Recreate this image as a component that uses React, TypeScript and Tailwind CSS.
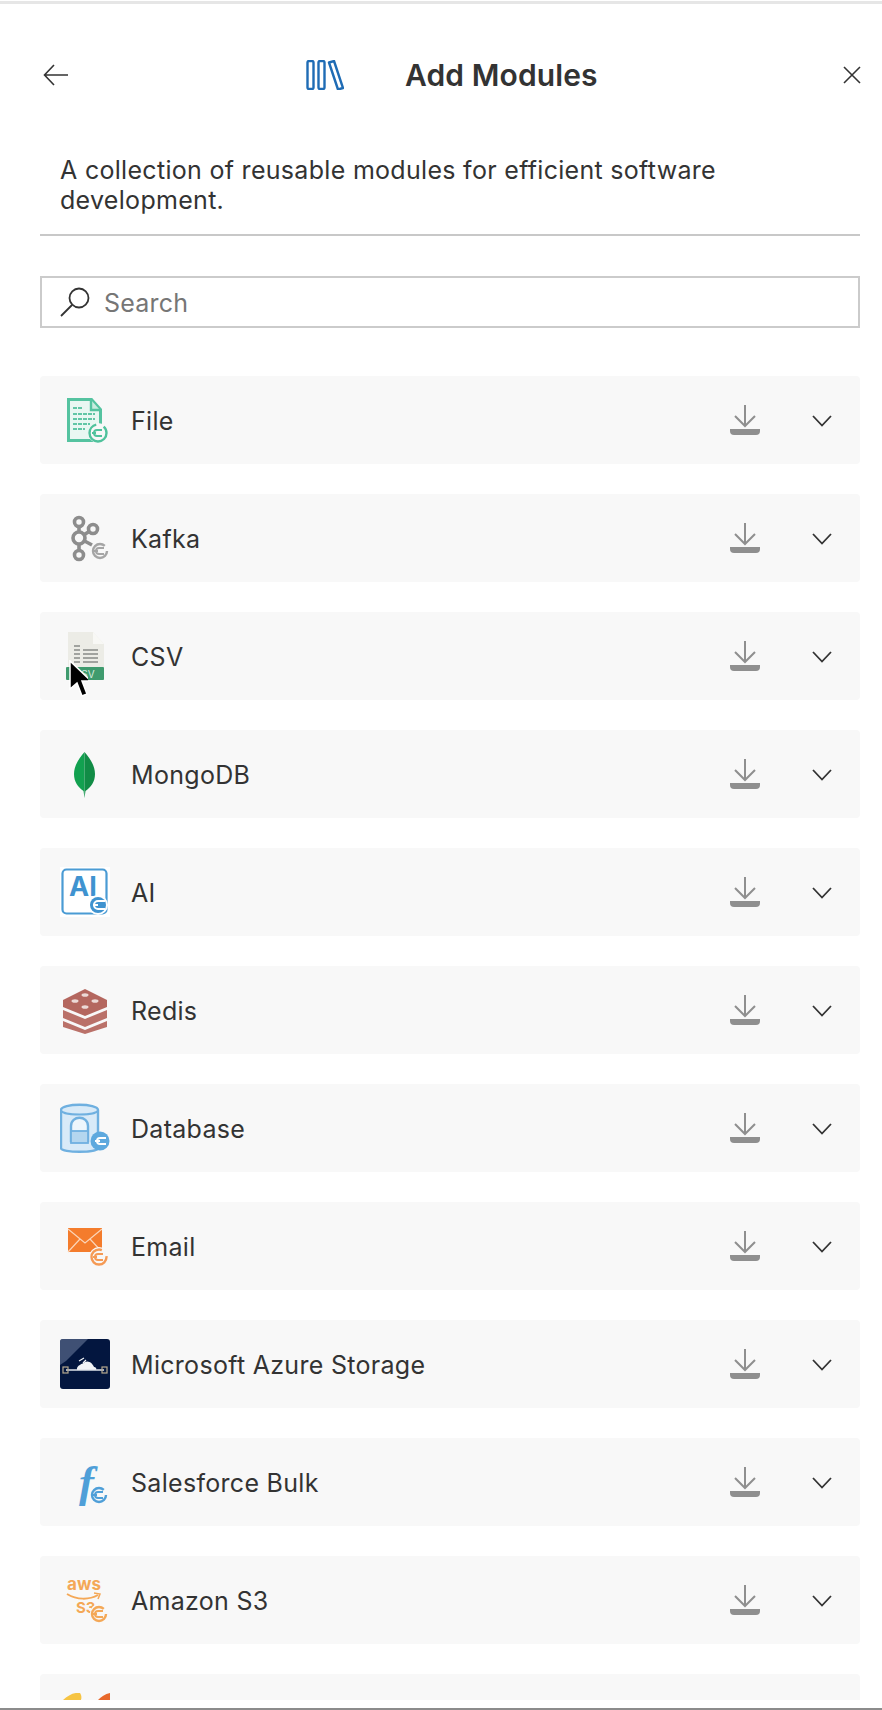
import React from 'react'

const PlugBadge = ({ color, cx = 38, cy = 39, r = 8 }: { color: string; cx?: number; cy?: number; r?: number }) => (
    <g fill="none" stroke={color}>
        <circle cx={cx} cy={cy} r={r} strokeWidth="2.4" strokeDasharray="38 8" fill="#f8f8f8" />
        <path d={`M${cx + 4} ${cy - 3}H${cx - 1}a3 3 0 0 0 0 6H${cx + 4}M${cx - 2} ${cy}H${cx - 6}`} strokeWidth="2" />
    </g>
)

const FileIcon = () => (
    <svg viewBox="0 0 50 50" className="w-full h-full">
        <path d="M8.500 4.500h23l9 10v31h-32z" fill="#e9f7f2" stroke="#55c3a0" strokeWidth="3" />
        <path d="M31 5v10h9" fill="#c9ecdf" stroke="#55c3a0" strokeWidth="2.400" />
        <path d="M13 13h9M13 19h22M13 24h22M13 29h17M13 34h12" stroke="#62c6a6" strokeWidth="2.200" strokeDasharray="4 1" />
        <circle cx="38" cy="38" r="10" fill="#f8f8f8" />
        <PlugBadge color="#4fc29c" cx={38} cy={38} r={8.500} />
    </svg>
)

const KafkaIcon = () => (
    <svg viewBox="0 0 50 50" className="w-full h-full" fill="none" stroke="#8d8d8d" strokeWidth="3.600">
        <path d="M19 11v28M19 25l14-9M19 25l13 7" />
        <circle cx="19" cy="9" r="4.500" fill="#f8f8f8" />
        <circle cx="19" cy="25" r="6" fill="#f8f8f8" />
        <circle cx="19" cy="42" r="4.500" fill="#f8f8f8" />
        <circle cx="33" cy="16" r="4.500" fill="#f8f8f8" />
        <PlugBadge color="#a5a5a5" cx={40} cy={38} r={7} />
    </svg>
)

const CsvIcon = () => (
    <svg viewBox="0 0 50 50" className="w-full h-full">
        <path d="M8 1h25l11 12v36H8z" fill="#ecece6" />
        <path d="M33 1v12h11z" fill="#f8f8f5" />
        <path d="M14 15h6M14 19h6M14 23h6M14 27h6M14 31h6M23 19h15M23 23h15M23 27h15M23 31h15" stroke="#a1a39f" strokeWidth="2" />
        <rect x="6" y="36" width="38" height="13" rx="1" fill="#3f9b6e" />
        <text x="28" y="46.500" textAnchor="middle" fontSize="10" fontFamily="Inter, sans-serif" fill="#d5eadf">SV</text>
    </svg>
)

const MongoIcon = () => (
    <svg viewBox="0 0 50 50" className="w-full h-full">
        <path d="M24.500 3C18 10 14 18 14 25c0 8 4 13 9.500 17L24.500 49z" fill="#12a150" />
        <path d="M24.500 3C31 10 35 18 35 25c0 8-4 13-9.500 17L24.500 49z" fill="#118c46" />
    </svg>
)

const AiIcon = () => (
    <svg viewBox="0 0 50 50" className="w-full h-full">
        <rect x="0" y="0" width="50" height="50" fill="#fff" />
        <rect x="2.500" y="2.500" width="44" height="44" rx="4" fill="#fff" stroke="#4a9bd4" strokeWidth="2.200" />
        <text x="9" y="29" fontSize="27" fontWeight="700" fontFamily="Inter, sans-serif" fill="#3f93d0">AI</text>
        <circle cx="38" cy="38" r="10" fill="#fff" />
        <circle cx="38" cy="38" r="8" fill="#3f93d0" />
        <path d="M45 34h-7a4 4 0 0 0 0 8h7M38 38h-5" fill="none" stroke="#fff" strokeWidth="2" />
    </svg>
)

const RedisIcon = () => (
    <svg viewBox="0 0 50 50" className="w-full h-full">
        <path d="M3 36l22 9 22-9v6l-22 7-22-7z" fill="#ba7169" />
        <path d="M3 25l22 9 22-9v8l-22 9-22-9z" fill="#ba7169" />
        <path d="M3 15l22-11 22 11v7l-22 9-22-9z" fill="#b4675f" />
        <ellipse cx="25" cy="10" rx="3.500" ry="1.800" fill="#ecd9d6" />
        <ellipse cx="35" cy="16" rx="3.500" ry="1.800" fill="#ecd9d6" />
        <ellipse cx="15" cy="16" rx="3.500" ry="1.800" fill="#ecd9d6" />
        <ellipse cx="25" cy="22" rx="3.500" ry="1.800" fill="#ecd9d6" />
    </svg>
)

const DatabaseIcon = () => (
    <svg viewBox="0 0 50 50" className="w-full h-full" fill="none">
        <path d="M1 7c0-7 37-7 37 0v38c0 5-37 5-37 0z" fill="#d8eaf8" stroke="#6fb0e0" strokeWidth="2.400" />
        <path d="M1 7c0 6 37 6 37 0" stroke="#6fb0e0" strokeWidth="2" />
        <path d="M11 38V23c0-11 17-11 17 0v15z" fill="#eef6fc" stroke="#6fb0e0" strokeWidth="2.400" />
        <rect x="11" y="28" width="17" height="12" fill="#b4d6ef" stroke="#6fb0e0" strokeWidth="1.800" />
        <circle cx="40" cy="38" r="9.500" fill="#5ea9de" />
        <path d="M46 35h-6a3 3 0 0 0 0 6h6M40 38h-5" stroke="#fff" strokeWidth="2" />
    </svg>
)

const EmailIcon = () => (
    <svg viewBox="0 0 50 50" className="w-full h-full">
        <rect x="8" y="7" width="34" height="24" fill="#f47c2c" />
        <path d="M8 8l17 14 17-14M8 31l12-13M42 31L30 18" fill="none" stroke="#fbd5b8" strokeWidth="1.200" />
        <circle cx="39" cy="36" r="10" fill="#f8f8f8" />
        <PlugBadge color="#f59a55" cx={39} cy={36} r={7.500} />
    </svg>
)

const AzureIcon = () => (
    <svg viewBox="0 0 50 50" className="w-full h-full">
        <rect width="50" height="50" rx="3" fill="#03163f" />
        <path d="M8 0h20L6 22 0 26V3a3 3 0 0 1 3-3z" fill="#5a6a8c" opacity="0.700" />
        <path d="M17 31c-1-5 6-6 8-8 4-2 8 2 9 5 2 0 3 2 2 3z" fill="#f2f4f7" />
        <path d="M19 22l5-3M23 24l3-3" stroke="#f2f4f7" strokeWidth="1.200" />
        <path d="M6 31h38" stroke="#dfe3ea" strokeWidth="1.500" />
        <rect x="3" y="28" width="5" height="6" fill="none" stroke="#b5a88e" strokeWidth="1.200" />
        <rect x="42" y="28" width="5" height="6" fill="none" stroke="#b5a88e" strokeWidth="1.200" />
    </svg>
)

const SalesforceIcon = () => (
    <svg viewBox="0 0 50 50" className="w-full h-full">
        <text x="19" y="40" fontSize="45" fontStyle="italic" fontWeight="700" fontFamily="'Liberation Serif', serif" fill="#4f9fd8">f</text>
        <circle cx="39" cy="38" r="10" fill="#f8f8f8" />
        <PlugBadge color="#4f9fd8" cx={39} cy={38} r={7} />
    </svg>
)

const S3Icon = () => (
    <svg viewBox="0 0 50 50" className="w-full h-full">
        <text x="7" y="15" fontSize="17" fontWeight="700" fontFamily="Inter, sans-serif" fill="#f4a857" textLength="34">aws</text>
        <path d="M7 19c10 6 22 6 31 1" fill="none" stroke="#f4a857" strokeWidth="2" />
        <path d="M34 18l6 1-2 5" fill="none" stroke="#f4a857" strokeWidth="1.500" />
        <text x="16" y="38" fontSize="15" fontWeight="700" fontFamily="Inter, sans-serif" fill="#f4a857">S3</text>
        <circle cx="39" cy="38" r="9" fill="#f8f8f8" />
        <PlugBadge color="#f4a857" cx={39} cy={39} r={7} />
    </svg>
)

const LastIcon = () => (
    <svg viewBox="0 0 50 50" className="w-full h-full">
        <path d="M3 7c5-5 12-8 17-7 2 3 2 7-1 10z" fill="#f6c443" />
        <path d="M38 7c3-3 7-6 12-7v10z" fill="#e8692c" />
    </svg>
)

const modules = [
    { name: 'File', icon: <FileIcon /> },
    { name: 'Kafka', icon: <KafkaIcon /> },
    { name: 'CSV', icon: <CsvIcon /> },
    { name: 'MongoDB', icon: <MongoIcon /> },
    { name: 'AI', icon: <AiIcon /> },
    { name: 'Redis', icon: <RedisIcon /> },
    { name: 'Database', icon: <DatabaseIcon /> },
    { name: 'Email', icon: <EmailIcon /> },
    { name: 'Microsoft Azure Storage', icon: <AzureIcon /> },
    { name: 'Salesforce Bulk', icon: <SalesforceIcon /> },
    { name: 'Amazon S3', icon: <S3Icon /> },
    { name: '', icon: <LastIcon /> },
]

const ModuleRow = ({ name, icon }: { name: string; icon: React.ReactNode }) => (
    <div className="shrink-0 h-[88px] flex items-center bg-[#f8f8f8] rounded-[4px] pl-[20px] pr-[28px]">
        <div className="w-[50px] h-[50px] shrink-0">{icon}</div>
        <span className="ml-[21px] mt-[2px] flex-1 text-[25px] tracking-[0.3px] leading-[30px] text-[#333]">{name}</span>
        <svg viewBox="0 0 30 30" className="w-[30px] h-[30px]" fill="none">
            <path d="M15 0v20M5 11l10 10 10-10" stroke="#8f8f8f" strokeWidth="2" />
            <path d="M0 24h30v2a4 4 0 0 1-4 4H4a4 4 0 0 1-4-4z" fill="#8f8f8f" />
        </svg>
        <svg viewBox="0 0 20 12" className="ml-[52px] mt-[2px] w-[20px] h-[12px]" fill="none">
            <path d="M1 1l9 9.500 9-9.500" stroke="#333" strokeWidth="1.800" />
        </svg>
    </div>
)

export default function App() {
    return (
        <div className="relative h-[1710px] flex flex-col overflow-hidden bg-white font-['Inter',sans-serif] text-[#333]">
            <div className="shrink-0 h-[3px] mt-[1px] bg-[#e6e6e6]" />

            <header className="shrink-0 h-[151px] pb-[9px] flex items-center pl-[43px] pr-[21px]">
                <svg viewBox="0 0 26 22" className="w-[26px] h-[22px]" fill="none">
                    <path d="M25 11H2M11 1L1.500 11 11 21" stroke="#333" strokeWidth="1.600" />
                </svg>
                <svg viewBox="0 0 38 30" className="ml-[237px] w-[38px] h-[30px]" fill="none">
                    <rect x="1.500" y="1" width="6" height="28" rx="1.500" stroke="#1f6cb5" strokeWidth="2.400" />
                    <rect x="12.500" y="1" width="6" height="28" rx="1.500" stroke="#1f6cb5" strokeWidth="2.400" />
                    <path d="M23 2.500l5-1.500 9 27-5 1.500z" stroke="#1f6cb5" strokeWidth="2.400" strokeLinejoin="round" />
                </svg>
                <h1 className="ml-[61px] flex-1 text-[30px] tracking-[0.1px] leading-[36px] font-semibold text-[#333]">Add Modules</h1>
                <svg viewBox="0 0 18 18" className="w-[18px] h-[18px]" fill="none">
                    <path d="M1 1l16 16M17 1L1 17" stroke="#333" strokeWidth="1.600" />
                </svg>
            </header>

            <div className="shrink-0 ml-[40px] mr-[22px] pl-[20px] pb-[19px] border-b-2 border-[#c8c8c8]">
                <p className="text-[25px] tracking-[0.3px] leading-[30px] text-[#333]">
                    A collection of reusable modules for efficient software development.
                </p>
            </div>

            <div className="shrink-0 mt-[40px] ml-[40px] mr-[22px] h-[52px] flex items-center border-2 border-[#cbcbcb] pl-[18px]">
                <svg viewBox="0 0 30 30" className="w-[30px] h-[30px] shrink-0" fill="none">
                    <circle cx="19" cy="11" r="9.500" stroke="#333" strokeWidth="1.800" />
                    <path d="M12 18L1 29" stroke="#333" strokeWidth="1.800" />
                </svg>
                <input
                    placeholder="Search"
                    className="ml-[14px] mt-[3px] flex-1 text-[25px] tracking-[0.2px] outline-none bg-transparent placeholder:text-[#767676]"
                />
            </div>

            <div className="flex-1 min-h-0 mt-[48px] ml-[40px] mr-[22px] overflow-hidden flex flex-col gap-[30px]">
                {modules.map((m, i) => (
                    <ModuleRow key={i} name={m.name} icon={m.icon} />
                ))}
            </div>

            <div className="shrink-0 h-[8px]" />
            <div className="shrink-0 h-[2px] bg-[#8c8c8c]" />

            {/* mouse pointer from the recording */}
            <svg viewBox="0 0 20 38" className="absolute left-[68px] top-[660px] w-[20px] h-[38px]">
                <path d="M2 1v28l7-6 5 13 5-2-5-13h9z" fill="#000" stroke="#fff" strokeWidth="1.500" />
            </svg>
        </div>
    )
}
